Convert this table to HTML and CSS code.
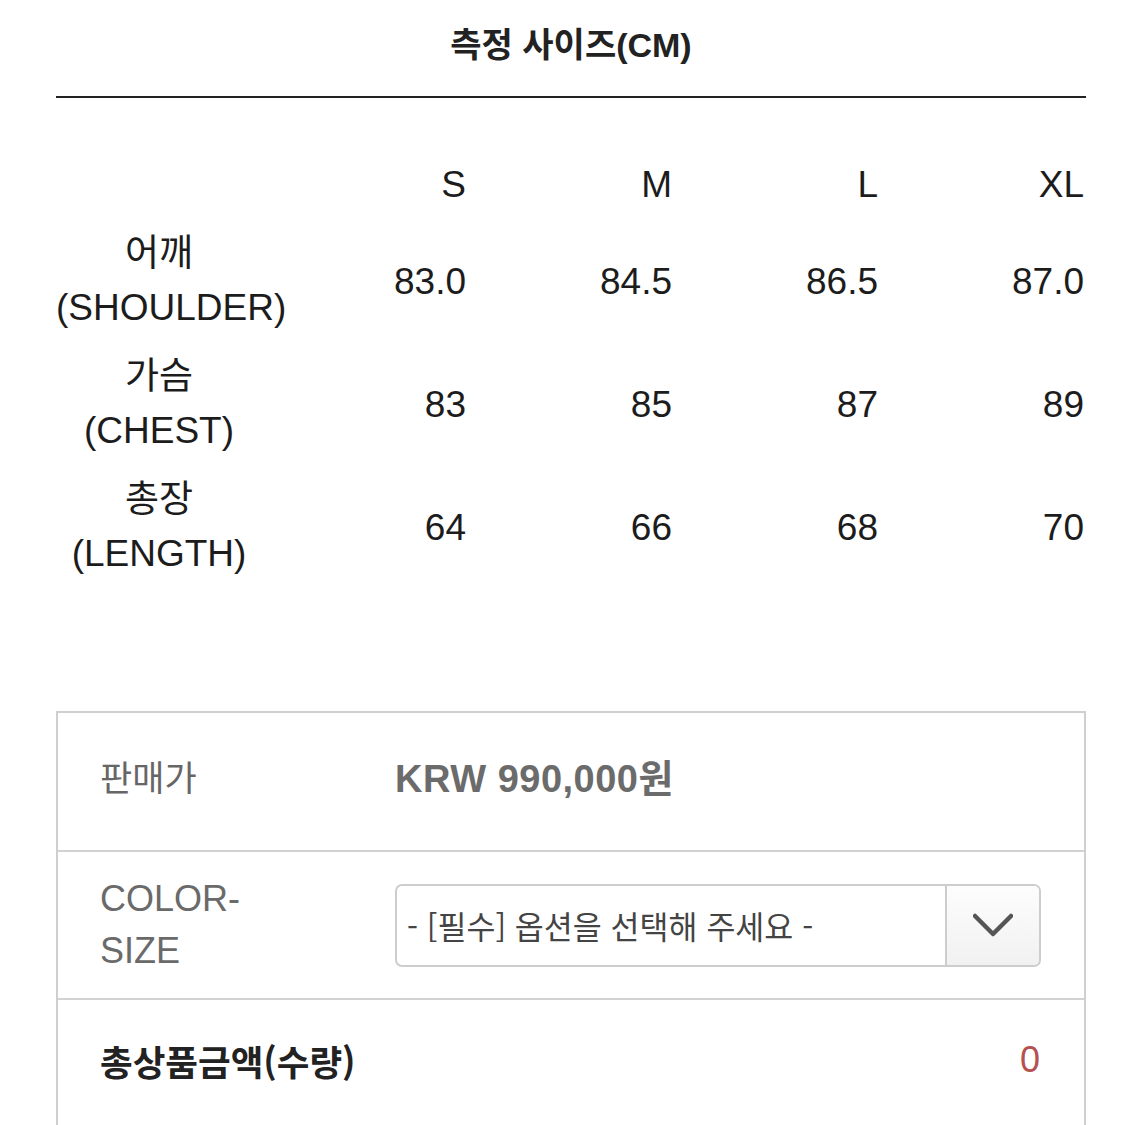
FILE: index.html
```html
<!DOCTYPE html>
<html lang="ko">
<head>
<meta charset="utf-8">
<link rel="stylesheet" href="styles.css">
</head>
<body>
<div class="page">
  <h1 class="title">측정 사이즈(CM)</h1>

  <div class="size-table">
    <div class="cell head"></div>
    <div class="cell head val">S</div>
    <div class="cell head val">M</div>
    <div class="cell head val">L</div>
    <div class="cell head val">XL</div>

    <div class="cell label">어깨<br>(SHOULDER)</div>
    <div class="cell val">83.0</div>
    <div class="cell val">84.5</div>
    <div class="cell val">86.5</div>
    <div class="cell val">87.0</div>

    <div class="cell label">가슴<br>(CHEST)</div>
    <div class="cell val">83</div>
    <div class="cell val">85</div>
    <div class="cell val">87</div>
    <div class="cell val">89</div>

    <div class="cell label">총장<br>(LENGTH)</div>
    <div class="cell val">64</div>
    <div class="cell val">66</div>
    <div class="cell val">68</div>
    <div class="cell val">70</div>
  </div>

  <div class="buy-box">
    <div class="row row-price">
      <div class="row-label">판매가</div>
      <div class="price"><b>KRW</b> 990,000원</div>
    </div>
    <div class="row row-option">
      <div class="row-label two-line">COLOR-<br>SIZE</div>
      <div class="select">
        <span class="select-text">- [필수] 옵션을 선택해 주세요 -</span>
        <span class="select-arrow">
          <svg width="40" height="24" viewBox="0 0 40 24"><polyline points="2,3 20,21 38,3" fill="none" stroke="#555" stroke-width="4.5" stroke-linecap="round" stroke-linejoin="round"/></svg>
        </span>
      </div>
    </div>
    <div class="row row-total">
      <div class="total-label">총상품금액(수량)</div>
      <div class="total-value">0</div>
    </div>
  </div>
</div>
</body>
</html>
```

FILE: styles.css
```css
* { box-sizing: border-box; }
html, body { margin: 0; padding: 0; background: #fff; }
body {
  font-family: "Liberation Sans", "Noto Sans CJK KR", sans-serif;
  color: #1c1c1c;
}
.page {
  width: 1030px;
  margin-left: 56px;
}
.title {
  margin: 0;
  padding-top: 25px;
  height: 98px;
  line-height: 40px;
  font-size: 34px;
  font-weight: bold;
  text-align: center;
  color: #222;
  border-bottom: 2px solid #222;
}
.size-table {
  margin-top: 52px;
  display: grid;
  grid-template-columns: repeat(5, 206px);
  grid-template-rows: 70px 123px 123px 123px;
  font-size: 37px;
}
.cell { white-space: nowrap; }
.head { line-height: 70px; }
.val {
  text-align: right;
  padding-right: 2px;
  display: flex;
  align-items: center;
  justify-content: flex-end;
}
.head.val { display: block; }
.label {
  text-align: center;
  line-height: 54px;
  padding-top: 7px;
}
.buy-box {
  margin-top: 122px;
  width: 1030px;
  border: 2px solid #cfcfcf;
  border-bottom: none;
}
.row {
  display: grid;
  grid-template-columns: 295px 1fr;
  align-items: center;
  padding: 0 42px;
}
.row-price {
  height: 139px;
  border-bottom: 2px solid #d2d2d2;
  padding-bottom: 12px;
}
.row-label {
  font-size: 35px;
  color: #666;
  font-family: "Noto Sans CJK KR", "Liberation Sans", sans-serif;
}
.row-label.two-line {
  font-family: "Liberation Sans", "Noto Sans CJK KR", sans-serif;
  font-size: 36px;
  line-height: 52px;
  color: #6a6a6a;
}
.price {
  font-size: 38px;
  color: #6b6b6b;
  font-weight: bold;
  letter-spacing: 0.5px;
}
.row-option {
  height: 148px;
  border-bottom: 2px solid #d2d2d2;
}
.select {
  width: 646px;
  height: 83px;
  border: 2px solid #cdcdcd;
  border-radius: 7px;
  display: flex;
  align-items: stretch;
  overflow: hidden;
}
.select-text {
  flex: 1;
  display: flex;
  align-items: center;
  padding-left: 10px;
  font-size: 31.5px;
  color: #444;
  font-family: "Noto Sans CJK KR", "Liberation Sans", sans-serif;
}
.select-arrow {
  width: 94px;
  border-left: 2px solid #cdcdcd;
  background: linear-gradient(#fdfdfd, #f1f1f1);
  display: flex;
  align-items: center;
  justify-content: center;
}
.row-total {
  height: 130px;
  grid-template-columns: 1fr auto;
  padding-bottom: 10px;
}
.total-label {
  font-size: 35.5px;
  font-weight: bold;
  color: #222;
  font-family: "Noto Sans CJK KR", "Liberation Sans", sans-serif;
}
.total-value {
  font-size: 36px;
  color: #b5514f;
  padding-right: 2px;
}
```
